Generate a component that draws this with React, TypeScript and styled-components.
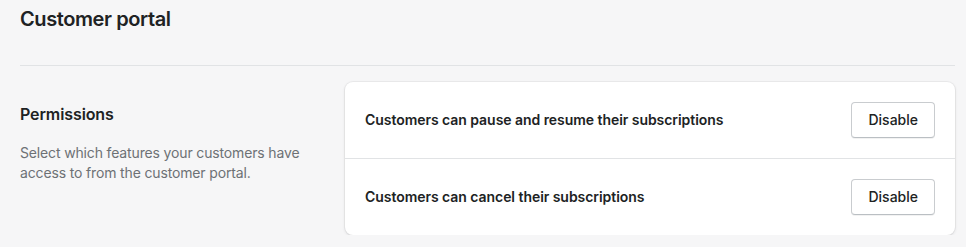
import React from "react";
import styled, { createGlobalStyle } from "styled-components";

const Global = createGlobalStyle`
  html, body { margin: 0; padding: 0; background: #f6f6f7; }
  body {
    font-family: Inter, "Noto Sans", "Liberation Sans", sans-serif;
    color: #202223;
    -webkit-font-smoothing: antialiased;
  }
`;

const Page = styled.div`
  padding: 5px 11px 0 20px;
  box-sizing: border-box;
  width: 966px;
`;

const Title = styled.h1`
  margin: 0;
  font-size: 20px;
  line-height: 28px;
  font-weight: 600;
  letter-spacing: -0.4px;
  color: #202223;
`;

const Divider = styled.hr`
  margin: 32px 0 0;
  border: none;
  border-top: 1px solid #e1e3e5;
`;

const Layout = styled.div`
  display: flex;
  gap: 20px;
  margin-top: 16px;
`;

const Annotation = styled.div`
  flex: 1 1 240px;
  padding-top: 20px;
  min-width: 0;
`;

const SectionTitle = styled.h2`
  margin: 0;
  font-size: 16px;
  line-height: 24px;
  font-weight: 600;
  letter-spacing: -0.1px;
  color: #202223;
`;

const Description = styled.p`
  margin: 17px 0 0;
  font-size: 14px;
  line-height: 20px;
  letter-spacing: -0.15px;
  color: #6d7175;
`;

const Card = styled.div`
  flex: 2 2 480px;
  min-width: 0;
  background: #ffffff;
  border-radius: 8px;
  box-shadow: 0 0 0 1px rgba(63, 63, 68, 0.05), 0 1px 3px 0 rgba(63, 63, 68, 0.15);
  overflow: hidden;
`;

const Row = styled.div<{ $first?: boolean }>`
  display: flex;
  align-items: center;
  justify-content: space-between;
  padding: 20px;
  border-top: ${(p) => (p.$first ? "none" : "1px solid #e1e3e5")};
`;

const RowLabel = styled.span`
  font-size: 14px;
  line-height: 20px;
  font-weight: 600;
  letter-spacing: -0.05px;
  color: #202223;
`;

const Button = styled.button`
  font-family: inherit;
  box-sizing: border-box;
  min-height: 36px;
  min-width: 36px;
  padding: 7px 16px;
  background: #ffffff;
  border: 1px solid #c9cccf;
  border-bottom-color: #babfc3;
  border-radius: 4px;
  box-shadow: 0 1px 0 rgba(0, 0, 0, 0.05);
  font-size: 14px;
  line-height: 20px;
  font-weight: 500;
  color: #202223;
  cursor: pointer;
`;

const permissions = [
  "Customers can pause and resume their subscriptions",
  "Customers can cancel their subscriptions",
];

export default function App() {
  return (
    <>
      <Global />
      <Page>
        <Title>Customer portal</Title>
        <Divider />
        <Layout>
          <Annotation>
            <SectionTitle>Permissions</SectionTitle>
            <Description>
              Select which features your customers have access to from the customer portal.
            </Description>
          </Annotation>
          <Card>
            {permissions.map((p, i) => (
              <Row key={p} $first={i === 0}>
                <RowLabel>{p}</RowLabel>
                <Button>Disable</Button>
              </Row>
            ))}
          </Card>
        </Layout>
      </Page>
    </>
  );
}
